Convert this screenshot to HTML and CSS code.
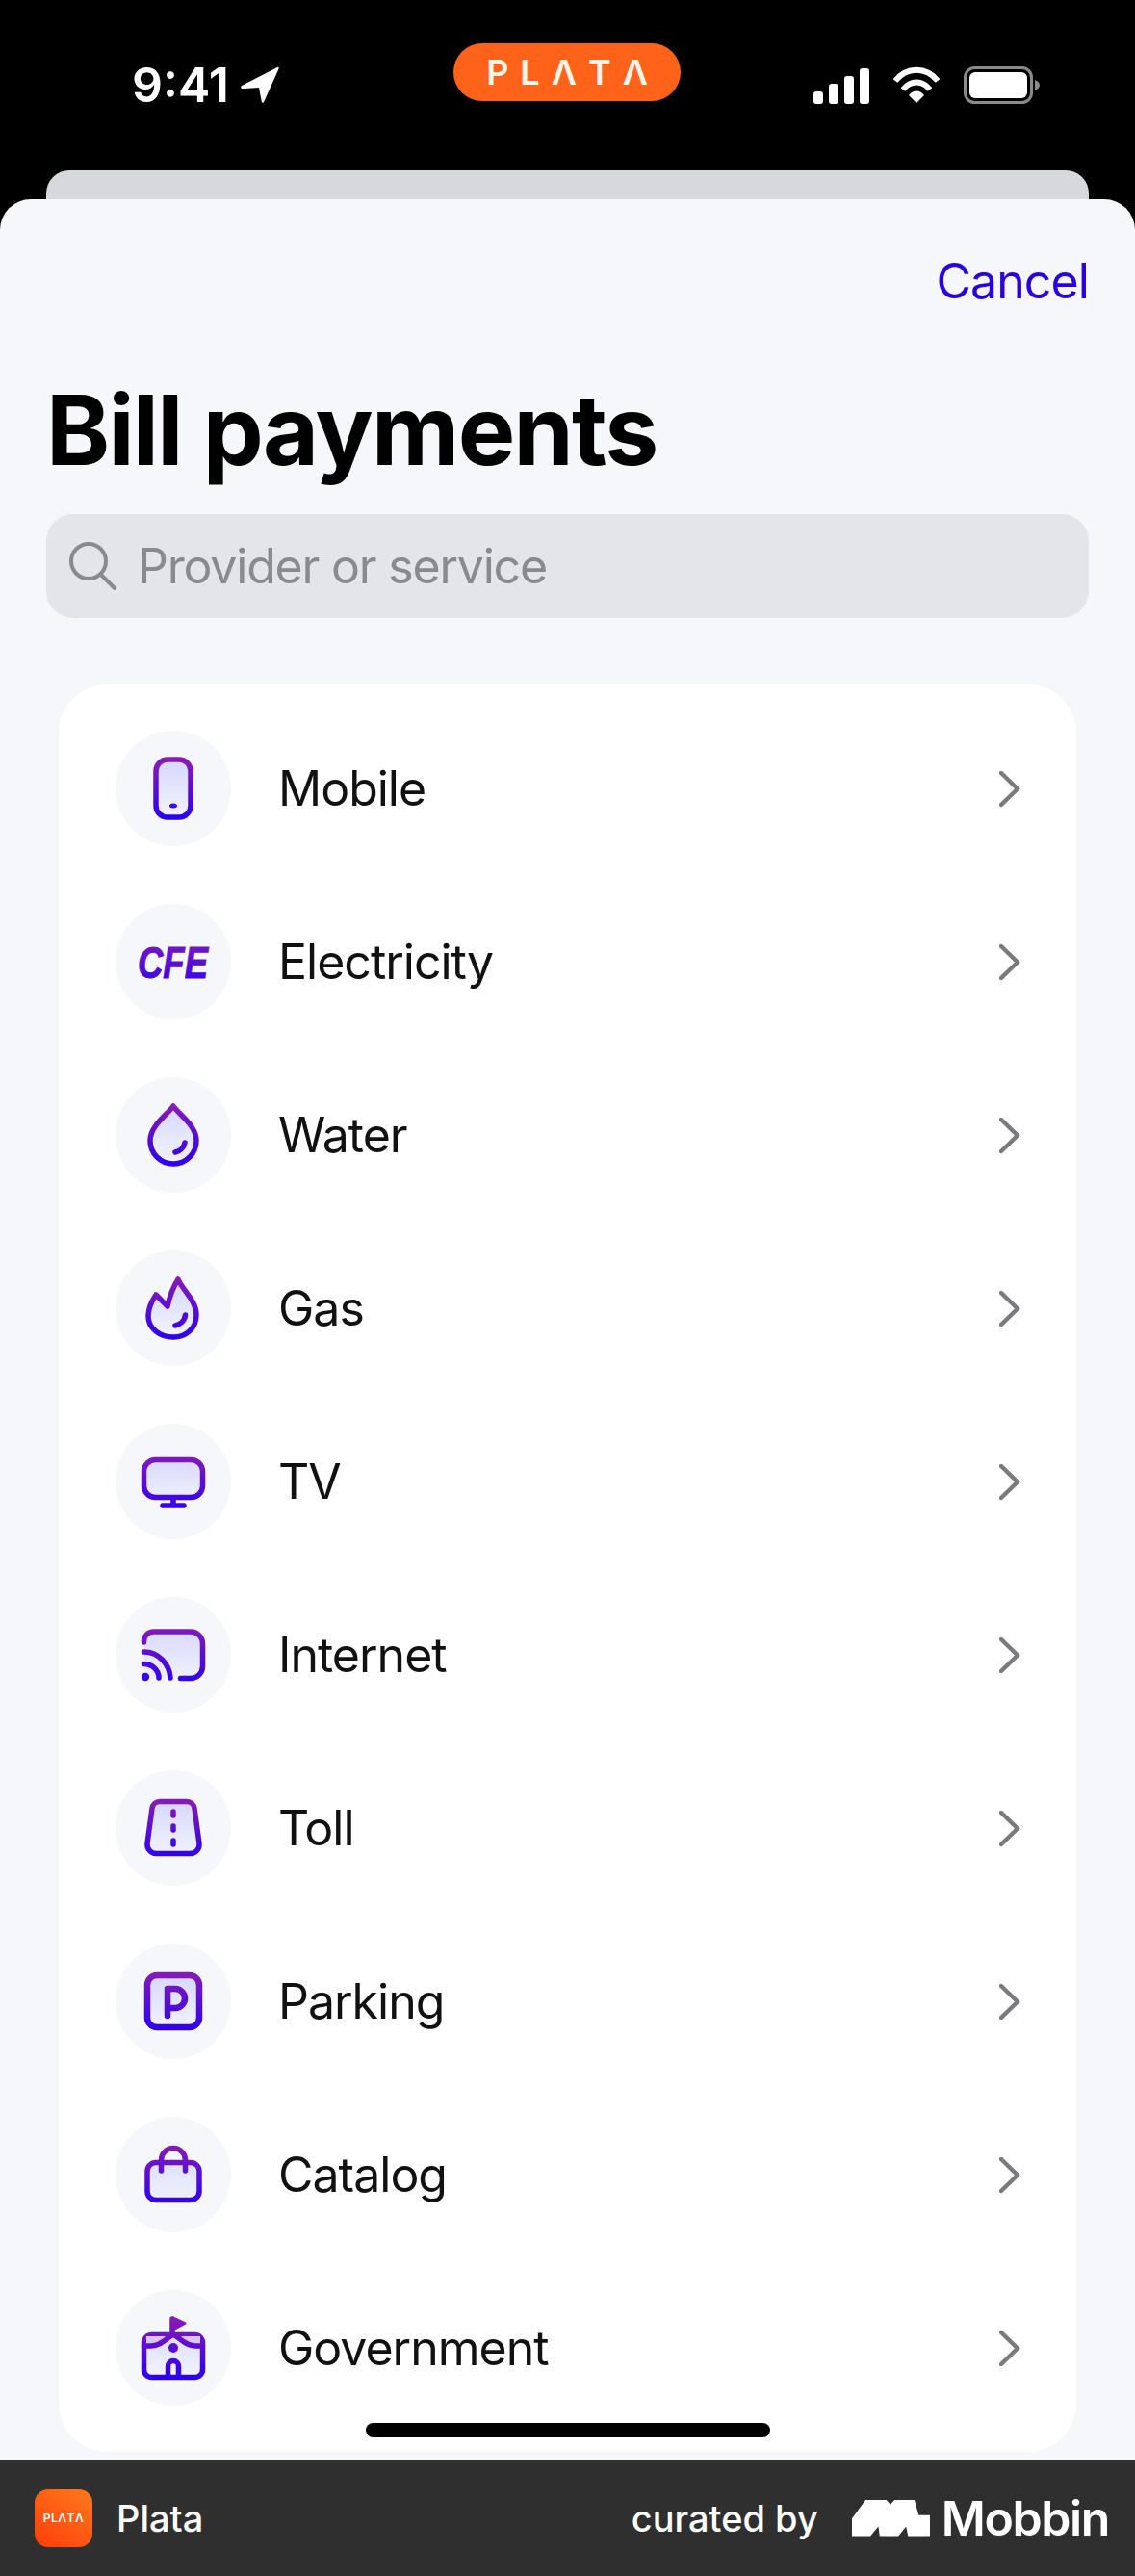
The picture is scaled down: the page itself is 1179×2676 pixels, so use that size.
FILE: index.html
```html
<!DOCTYPE html>
<html>
<head>
  <meta charset="UTF-8" />
  <title>Bill payments</title>
  <link rel="stylesheet" href="styles.css">
</head>
<body>
  <svg class="defs" width="0" height="0">
    <defs>
      <linearGradient id="line" gradientUnits="userSpaceOnUse" x1="0" y1="27" x2="0" y2="93">
        <stop offset="0" stop-color="#8c1cb4"/>
        <stop offset="1" stop-color="#2a00f0"/>
      </linearGradient>
      <linearGradient id="tint" gradientUnits="userSpaceOnUse" x1="0" y1="27" x2="0" y2="93">
        <stop offset="0" stop-color="#d3d6fd"/>
        <stop offset="1" stop-color="#f4f5fc"/>
      </linearGradient>
    </defs>
  </svg>

  <div class="status">
    <div class="status-left">
      <span class="time">9:41</span>
      <svg width="40" height="38" viewBox="0 0 40 38"><path d="M1 20 38 1c1-.5 2 .4 1.600 1.500L24 37c-.6 1.200-2 1-2.200-.3L19 22 2 23c-2 0-2.500-2-1-3z" fill="#fff"/></svg>
    </div>
    <div class="pill">PLΛTΛ</div>
    <div class="status-right">
      <svg width="58" height="37" viewBox="0 0 58 37" fill="#fff">
        <rect x="0" y="24" width="10" height="13" rx="3"/>
        <rect x="16" y="16" width="10" height="21" rx="3"/>
        <rect x="32" y="8" width="10" height="29" rx="3"/>
        <rect x="48" y="0" width="10" height="37" rx="3"/>
      </svg>
      <svg width="50" height="39" viewBox="0 0 50 39" fill="none" stroke="#fff" stroke-width="6">
        <path d="M3 15C15 0 35 0 47 15"/>
        <path d="M11 24C19 14 31 14 39 24"/>
        <path d="M25 38 17 30C21 24 29 24 33 30Z" fill="#fff" stroke="none"/>
      </svg>
      <svg width="80" height="39" viewBox="0 0 80 39">
        <rect x="1.500" y="1.500" width="69" height="36" rx="10" fill="none" stroke="#8a8a8a" stroke-width="3"/>
        <rect x="6" y="6" width="60" height="27" rx="6" fill="#fff"/>
        <path d="M74 14c3 1 5 3 5 5.500S77 24 74 25z" fill="#8a8a8a"/>
      </svg>
    </div>
  </div>
  <div class="back-sheet"></div>

  <div class="sheet">
    <div class="cancel-row"><span class="cancel">Cancel</span></div>
    <h1 class="title">Bill payments</h1>
    <div class="search">
      <svg width="50" height="50" viewBox="0 0 50 50" fill="none" stroke="#8a8a8e" stroke-width="4" stroke-linecap="round">
        <circle cx="20" cy="20" r="18"/>
        <path d="M33 34 47 48"/>
      </svg>
      <span>Provider or service</span>
    </div>

    <div class="card">
      <div class="row">
        <div class="circle">
          <svg class="icon" viewBox="0 0 120 120">
            <rect class="shape" x="42" y="30" width="36" height="60" rx="12"/>
            <ellipse cx="60" cy="78" rx="4" ry="2.500" fill="url(#line)"/>
          </svg>
        </div>
        <span class="label">Mobile</span>
        <svg class="chevron" viewBox="0 0 22 37"><path d="M2 2 19 18.500 2 35"/></svg>
      </div>
      <div class="row">
        <div class="circle">
          <svg class="icon" viewBox="0 0 120 120">
            <text class="cfe" x="23" y="77" textLength="73" lengthAdjust="spacingAndGlyphs">CFE</text>
          </svg>
        </div>
        <span class="label">Electricity</span>
        <svg class="chevron" viewBox="0 0 22 37"><path d="M2 2 19 18.500 2 35"/></svg>
      </div>
      <div class="row">
        <div class="circle">
          <svg class="icon" viewBox="0 0 120 120">
            <path class="shape" d="M60 30C66 39 84 50 84 66A24 24 0 0 1 36 66C36 50 54 39 60 30Z"/>
            <path class="stroke" d="M62 78C67 77 71 73 72 68"/>
          </svg>
        </div>
        <span class="label">Water</span>
        <svg class="chevron" viewBox="0 0 22 37"><path d="M2 2 19 18.500 2 35"/></svg>
      </div>
      <div class="row">
        <div class="circle">
          <svg class="icon" viewBox="0 0 120 120">
            <path class="shape" d="M65 30C70 42 84 52 84 67C84 81 73 90 60 90C46 90 34 81 34 68C34 60 38 52 42 46L54 58C56 48 60 38 65 30Z"/>
            <path class="stroke" d="M62 78C67 77 72 73 72.500 67"/>
          </svg>
        </div>
        <span class="label">Gas</span>
        <svg class="chevron" viewBox="0 0 22 37"><path d="M2 2 19 18.500 2 35"/></svg>
      </div>
      <div class="row">
        <div class="circle">
          <svg class="icon" viewBox="0 0 120 120">
            <rect class="shape" x="29.500" y="37.500" width="61" height="39" rx="12"/>
            <path class="stroke" d="M60 78V85M49 85H71"/>
          </svg>
        </div>
        <span class="label">TV</span>
        <svg class="chevron" viewBox="0 0 22 37"><path d="M2 2 19 18.500 2 35"/></svg>
      </div>
      <div class="row">
        <div class="circle">
          <svg class="icon" viewBox="0 0 120 120">
            <path d="M29.500 47V45A9 9 0 0 1 38.500 36H78A12.500 12.500 0 0 1 90.500 48.500V72A12.500 12.500 0 0 1 78 84.500H30Z" fill="url(#tint)"/>
            <path class="stroke" d="M29.500 47V46A10 10 0 0 1 39.500 36H78A12.500 12.500 0 0 1 90.500 48.500V72A12.500 12.500 0 0 1 78 84.500H67.500"/>
            <path class="stroke" d="M29.500 57C45 57 56 70 57 84M29.500 69.500C38 69.500 45 76 45 84"/>
            <circle cx="31" cy="83" r="4.200" fill="url(#line)"/>
          </svg>
        </div>
        <span class="label">Internet</span>
        <svg class="chevron" viewBox="0 0 22 37"><path d="M2 2 19 18.500 2 35"/></svg>
      </div>
      <div class="row">
        <div class="circle">
          <svg class="icon" viewBox="0 0 120 120">
            <path class="shape" d="M46 32.500H74A8 8 0 0 1 82 39.500L87 76A9.500 9.500 0 0 1 78 86.500H42A9.500 9.500 0 0 1 33 76L38 39.500A8 8 0 0 1 46 32.500Z"/>
            <path class="stroke" d="M60 43V47M60 58V62M60 73V77"/>
          </svg>
        </div>
        <span class="label">Toll</span>
        <svg class="chevron" viewBox="0 0 22 37"><path d="M2 2 19 18.500 2 35"/></svg>
      </div>
      <div class="row">
        <div class="circle">
          <svg class="icon" viewBox="0 0 120 120">
            <rect class="shape heavy" x="33" y="33" width="54" height="54" rx="10"/>
            <path class="stroke heavy" d="M54 75V47H62A10 10 0 0 1 62 67H54"/>
          </svg>
        </div>
        <span class="label">Parking</span>
        <svg class="chevron" viewBox="0 0 22 37"><path d="M2 2 19 18.500 2 35"/></svg>
      </div>
      <div class="row">
        <div class="circle">
          <svg class="icon" viewBox="0 0 120 120">
            <rect class="shape" x="33" y="47.500" width="54" height="39" rx="9"/>
            <path class="stroke" d="M47.500 56V45A12.500 12.500 0 0 1 72.500 45V56"/>
          </svg>
        </div>
        <span class="label">Catalog</span>
        <svg class="chevron" viewBox="0 0 22 37"><path d="M2 2 19 18.500 2 35"/></svg>
      </div>
      <div class="row">
        <div class="circle">
          <svg class="icon" viewBox="0 0 120 120">
            <rect class="shape" x="29.500" y="46.500" width="61" height="44" rx="8"/>
            <path d="M32 48H52C47 54 42 58 32 58ZM88 48H68C73 54 78 58 88 58Z" fill="#d9c6f3"/>
            <path class="stroke" d="M29.500 58H37C47 58 53 50 60 46C67 50 73 58 83 58H90.500"/>
            <path class="stroke" d="M59 46V30"/>
            <path d="M59 27 72 33C74 34 74 35 72 36L59 43Z" fill="url(#line)"/>
            <circle cx="60" cy="60" r="5" fill="url(#line)"/>
            <path class="stroke" d="M54.500 89V79A5.500 5.500 0 0 1 65.500 79V89"/>
          </svg>
        </div>
        <span class="label">Government</span>
        <svg class="chevron" viewBox="0 0 22 37"><path d="M2 2 19 18.500 2 35"/></svg>
      </div>
    </div>
    <div class="home-bar"></div>
  </div>

  <div class="footer">
    <div class="app">
      <div class="app-icon">PLΛTΛ</div>
      <span>Plata</span>
    </div>
    <div class="curated">
      <span>curated by</span>
      <svg width="81" height="38" viewBox="78 78 242 113"><path d="M78 135 120 78H185L197 92 210 78H272L285 125H320V190H252L246 160 222 190H164L160 160 135 190H78Z" fill="#fff"/></svg>
      <span class="mobbin">Mobbin</span>
    </div>
  </div>
</body>
</html>
```

FILE: styles.css
```css
* {
  box-sizing: border-box;
}
html, body {
  margin: 0;
  height: 2676px;
  overflow: hidden;
}
body {
  background: #000;
  display: flex;
  flex-direction: column;
  font-family: Inter, "Noto Sans", sans-serif;
}
.defs {
  display: block;
  flex: none;
}

/* status bar */
.status {
  height: 177px;
  flex: none;
  display: flex;
  align-items: flex-start;
  padding-top: 45px;
  color: #fff;
}
.status-left {
  width: 471px;
  padding-left: 137px;
  display: flex;
  align-items: center;
  gap: 12px;
  margin-top: 24px;
}
.time {
  font-size: 50px;
  font-weight: 600;
  line-height: 38px;
}
.pill {
  width: 236px;
  height: 60px;
  border-radius: 30px;
  background: #ff6319;
  color: #fff4ea;
  font-size: 36px;
  font-weight: 600;
  letter-spacing: 12px;
  text-indent: 12px;
  line-height: 60px;
  text-align: center;
}
.status-right {
  margin-left: 138px;
  display: flex;
  align-items: flex-end;
  gap: 24px;
  margin-top: 24px;
}
.back-sheet {
  height: 30px;
  flex: none;
  margin: 0 48px;
  background: #d6d8dc;
  border-radius: 24px 24px 0 0;
}

/* sheet */
.sheet {
  position: relative;
  height: 2349px;
  flex: none;
  background: #f5f7fb;
  border-radius: 32px 32px 0 0;
  padding: 0 48px;
}
.cancel-row {
  display: flex;
  justify-content: flex-end;
  padding-top: 55px;
}
.cancel {
  color: #2a00e0;
  font-size: 50px;
  line-height: 60px;
  letter-spacing: -0.9px;
}
.title {
  margin: 65px 0 0;
  font-size: 100px;
  font-weight: 700;
  line-height: 120px;
  letter-spacing: -1.7px;
  color: #000;
}
.search {
  height: 108px;
  margin-top: 27px;
  display: flex;
  align-items: center;
  gap: 21px;
  padding-left: 24px;
  background: #e4e5ea;
  border-radius: 28px;
  color: #8a8a8e;
  font-size: 50px;
  letter-spacing: -1.2px;
}

/* list */
.card {
  margin: 69px 13px 0;
  height: 1836px;
  padding: 48px 0;
  background: #fff;
  border-radius: 50px;
  display: flex;
  flex-direction: column;
  gap: 60px;
}
.row {
  height: 120px;
  display: flex;
  align-items: center;
  padding: 0 58px 0 59px;
}
.circle {
  width: 120px;
  height: 120px;
  flex: none;
  border-radius: 50%;
  background: #f5f7fb;
}
.icon {
  display: block;
  width: 120px;
  height: 120px;
}
.shape {
  fill: url(#tint);
  stroke: url(#line);
  stroke-width: 5.5;
  stroke-linejoin: round;
}
.stroke {
  fill: none;
  stroke: url(#line);
  stroke-width: 5.5;
  stroke-linecap: round;
  stroke-linejoin: round;
}
.heavy {
  stroke-width: 6.5;
}
.cfe {
  font-family: "Liberation Sans", sans-serif;
  font-size: 47px;
  font-weight: 700;
  font-style: italic;
  fill: url(#line);
  stroke: url(#line);
  stroke-width: 1;
}
.label {
  flex: 1;
  margin-left: 49px;
  font-size: 50px;
  color: #111;
  letter-spacing: -1px;
}
.chevron {
  width: 22px;
  height: 37px;
  flex: none;
  fill: none;
  stroke: #7b7b7d;
  stroke-width: 4.500;
  stroke-linecap: round;
  stroke-linejoin: round;
}
.home-bar {
  position: absolute;
  left: 380px;
  bottom: 24px;
  width: 420px;
  height: 15px;
  border-radius: 8px;
  background: #000;
}

/* footer */
.footer {
  height: 120px;
  flex: none;
  background: #2f2f2f;
  display: flex;
  justify-content: space-between;
  align-items: center;
  padding: 0 27px 0 36px;
  color: #fff;
  font-weight: 500;
  font-size: 38px;
}
.app {
  display: flex;
  align-items: center;
  gap: 25px;
}
.app-icon {
  width: 60px;
  height: 60px;
  border-radius: 14px;
  background: linear-gradient(35deg, #ff3d0a, #ff7a1c);
  font-size: 12px;
  font-weight: 600;
  letter-spacing: 0.5px;
  line-height: 60px;
  text-align: center;
}
.curated {
  display: flex;
  align-items: center;
}
.curated svg {
  margin-left: 35px;
}
.mobbin {
  margin-left: 12px;
  font-size: 50px;
  font-weight: 600;
  letter-spacing: -1.4px;
}
```
